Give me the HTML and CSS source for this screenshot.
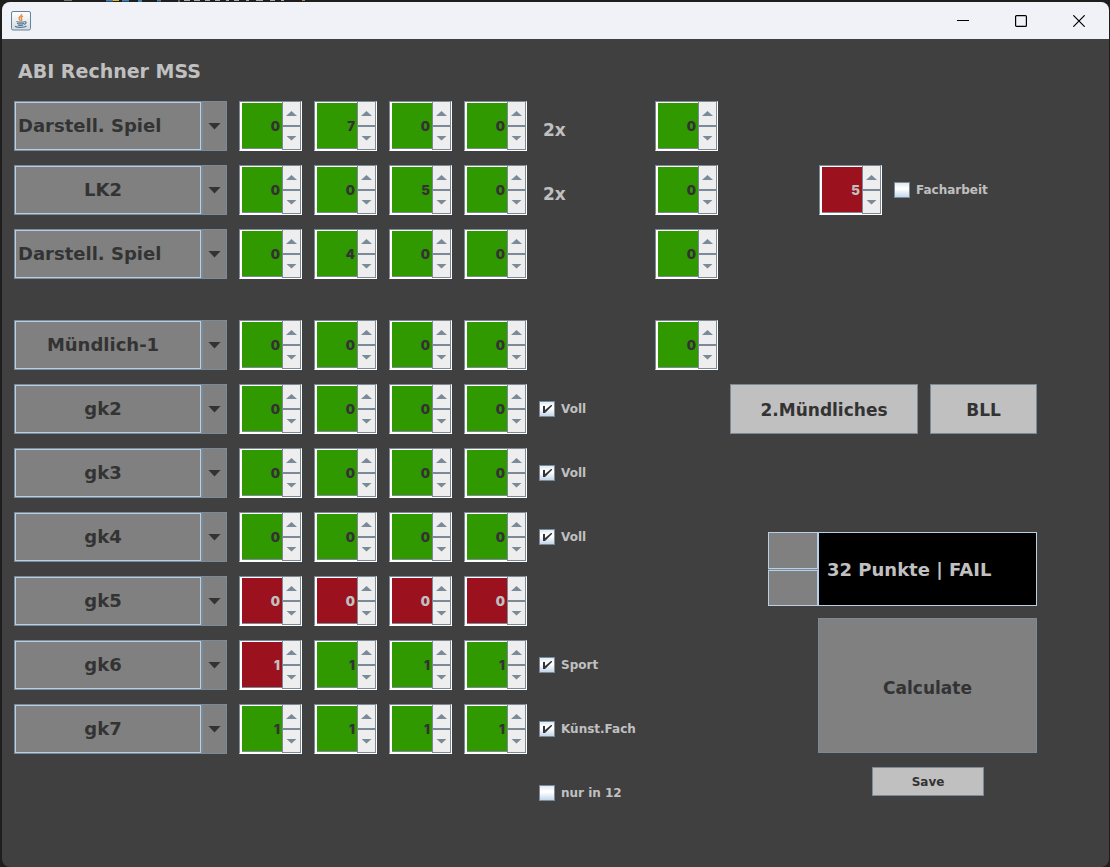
FILE: index.html
```html
<!DOCTYPE html>
<html lang="de">
<head>
<meta charset="utf-8">
<meta name="viewport" content="width=device-width, initial-scale=1">
<title>ABI Rechner</title>
<link rel="stylesheet" href="styles.css">
</head>
<body>
<svg class="backdrop-marks" width="320" height="2" aria-hidden="true">
  <path d="M64 .5h8" stroke="#77736a"/><path d="M106 .5h7M122 .5h7M138 1h4M157 .5h4" stroke="#3f7fae" stroke-width="2"/>
  <path d="M113 .5h6" stroke="#e8b417"/><path d="M178 1h2M184 .5h6M194 .5h6M205 .5h5M215 .5h5M226 .5h3M234 .5h5M246 .5h3M256 .5h7M270 .5h5M281 .5h3" stroke="#aaa"/><path d="M302 .5h3" stroke="#b87d4b"/>
</svg>
<div class="window">
  <header class="titlebar">
    <svg class="java-icon" width="20" height="20" viewBox="0 0 20 20" aria-hidden="true">
      <defs><linearGradient id="tile" x1="0" y1="0" x2="0" y2="1"><stop offset="0" stop-color="#fff"/><stop offset="1" stop-color="#d6dade"/></linearGradient></defs>
      <rect x=".5" y=".5" width="19" height="18.5" rx="1.5" fill="url(#tile)" stroke="#64849c"/>
      <path d="M10.7 3c.4 2-3.200 2.600-2.600 4.500.2.900 1 1.500 1.400 2.300M12 5.200c-2 .8-2.200 1.700-1.400 2.700.5.700.2 1.300-.3 1.900" fill="none" stroke="#ec8332" stroke-width="1.300"/>
      <path d="M5.500 10.500c1.800.8 6.500.8 8.300 0M6 12.300c1.800.7 5 .7 7 0M6.800 14c1.600.6 3.800.6 5.400 0M13.600 10.700c2.300-.5 2 2.300-.8 2.800M4 15.300c2 1.600 9.500 1.400 11.500-.3" fill="none" stroke="#557a98" stroke-width="1.200"/>
    </svg>
    <div class="window-controls">
      <button class="window-button" aria-label="Minimieren"><svg width="12" height="12" viewBox="0 0 12 12"><path d="M0 5.500h12" stroke="#000"/></svg></button>
      <button class="window-button" aria-label="Maximieren"><svg width="12" height="12" viewBox="0 0 12 12"><rect x=".6" y=".6" width="10.800" height="10.800" rx="1" fill="none" stroke="#000" stroke-width="1.200"/></svg></button>
      <button class="window-button" aria-label="Schließen"><svg width="12" height="12" viewBox="0 0 12 12"><path d="M.3.300l11.400 11.400M11.700.300L.3 11.700" stroke="#000" stroke-width="1.200"/></svg></button>
    </div>
  </header>

  <main class="content">
    <h1 class="heading">ABI Rechner MSS</h1>

    <section class="courses" id="advanced" aria-label="Leistungskurse"></section>

    <div class="lower">
      <section class="courses" id="basic" aria-label="Grundkurse"></section>

      <section class="side" aria-label="Ergebnis">
        <div id="oral-exam"></div>
        <div class="exam-buttons">
          <button class="button button-wide">2.Mündliches</button>
          <button class="button button-narrow">BLL</button>
        </div>
        <div class="result">
          <div class="result-steps">
            <button class="result-step" aria-label="Vorheriges"></button>
            <button class="result-step" aria-label="Nächstes"></button>
          </div>
          <output class="result-text">32 Punkte | FAIL</output>
        </div>
        <button class="button button-calculate">Calculate</button>
        <button class="button button-save">Save</button>
      </section>
    </div>
  </main>
</div>

<template id="spinner-template">
  <div class="spinner">
    <input class="spinner-value" type="number" min="0" max="15">
    <button class="spinner-button spinner-up" aria-label="Erhöhen"></button>
    <button class="spinner-button spinner-down" aria-label="Verringern"></button>
  </div>
</template>

<template id="combo-template">
  <div class="combo">
    <select class="combo-select"></select>
    <span class="combo-frame"></span>
    <span class="combo-arrow"></span>
  </div>
</template>

<script src="app.js"></script>
</body>
</html>
```

FILE: styles.css
```css
:root {
  --steel: #7a8a99;
  --sky: #b8cfe5;
  --gray: #808080;
  --silver: #c0c0c0;
  --ink: #333;
}

* {
  box-sizing: border-box;
}

body {
  margin: 0;
  min-height: 100vh;
  display: flex;
  flex-direction: column;
  background: #1e1e1e;
  color: var(--silver);
  font: bold 12px/16px "DejaVu Sans", sans-serif;
}

button, input, select {
  margin: 0;
  padding: 0;
  border: 0;
  border-radius: 0;
  font: inherit;
  color: inherit;
}

.backdrop-marks {
  display: block;
}

.window {
  flex: 1;
  display: flex;
  flex-direction: column;
  margin: 0 1px 0 2px;
  border-radius: 8px;
  overflow: hidden;
  background: #404040;
}

.titlebar {
  height: 37px;
  display: flex;
  justify-content: space-between;
  align-items: center;
  padding: 0 1px 0 9px;
  background: #f1f2f8;
}

.window-controls {
  display: flex;
  height: 100%;
}

.window-button {
  width: 58px;
  display: flex;
  justify-content: center;
  align-items: center;
  background: none;
}

.content {
  padding: 20px 72px 20px 12px;
}

.heading {
  margin: 0 0 18px;
  padding-left: 4px;
  font-size: 19px;
  line-height: 24px;
}

.courses {
  display: flex;
  flex-direction: column;
  gap: 14px;
}

.row {
  min-height: 50px;
  display: grid;
  grid-template-columns: 213px repeat(4, 63px) 104px 63px 1fr;
  column-gap: 12px;
  align-items: center;
}

#basic .row {
  grid-template-columns: 213px repeat(4, 63px) 104px;
}

.row-note {
  grid-column: 6;
}

.factor {
  padding: 8px 0 0 4px;
  font-size: 17px;
}

.paper {
  display: flex;
  align-items: center;
  gap: 12px;
  padding-left: 89px;
}

.lower {
  display: flex;
  gap: 12px;
  margin-top: 41px;
}

/* Combo boxes */
.combo {
  display: grid;
  grid-template-columns: 1fr 25px;
  height: 50px;
}

.combo-select {
  grid-area: 1 / 1 / 2 / 3;
  appearance: none;
  width: 100%;
  padding-right: 35px;
  border: 1px solid var(--steel);
  background: var(--gray);
  color: var(--ink);
  font-size: 18px;
  line-height: 24px;
  text-align-last: center;
}

.combo-left .combo-select {
  padding-left: 3px;
  text-align-last: left;
}

.combo-frame {
  grid-area: 1 / 1;
  margin: 1px;
  border: 1px solid var(--sky);
  box-shadow: 0 1px var(--steel), 1px 0 var(--steel);
  pointer-events: none;
}

.combo-arrow {
  grid-area: 1 / 2;
  display: flex;
  justify-content: center;
  align-items: center;
  border: 1px solid var(--steel);
  pointer-events: none;
}

.combo-arrow::before {
  content: "";
  width: 13px;
  height: 7px;
  background: var(--ink);
  clip-path: polygon(0 0, 100% 0, 50% 100%);
}

/* Spinners */
.spinner {
  width: 63px;
  height: 50px;
  display: grid;
  grid-template: 1fr 1fr / 1fr 19px;
  border: 1px solid;
  border-color: var(--steel) #fff #fff var(--steel);
  background: #fff;
}

.spinner-value {
  grid-area: 1 / 1 / 3 / 2;
  appearance: textfield;
  min-width: 0;
  margin: 1px 0 1px 2px;
  padding-right: 2px;
  border-bottom: 1px solid var(--steel);
  background: #309900;
  color: var(--ink);
  font: 900 13px "Inter", sans-serif;
  text-align: right;
}

.spinner-value::-webkit-inner-spin-button {
  display: none;
}

.spinner-low .spinner-value {
  background: #9b111e;
  color: var(--silver);
}

.spinner-button {
  grid-column: 2;
  display: flex;
  justify-content: center;
  align-items: center;
  border: solid var(--steel);
  border-width: 0 1px 1px;
  background: #eee;
}

.spinner-down {
  border-top-width: 1px;
}

.spinner-button::before {
  content: "";
  width: 11px;
  height: 5px;
  background: var(--steel);
}

.spinner-up::before {
  clip-path: polygon(50% 0, 100% 100%, 0 100%);
}

.spinner-down::before {
  clip-path: polygon(0 0, 100% 0, 50% 100%);
}

/* Tick boxes */
.check {
  display: flex;
  align-items: center;
  gap: 6px;
  line-height: 18px;
  white-space: nowrap;
}

.check-box {
  appearance: none;
  width: 16px;
  height: 16px;
  border: 1px solid var(--steel);
  background: linear-gradient(#dfe9f3, #fff 35%, #fff 45%, #c3d6e9);
}

.check-box:checked::before {
  content: "";
  display: block;
  width: 14px;
  height: 14px;
  background: var(--ink);
  clip-path: polygon(3px 4px, 5px 4px, 5px 8px, 11px 3px, 12px 3px, 12px 4px, 5px 11px, 3px 11px);
}

/* Right-hand side */
.side {
  flex: 1;
  display: flex;
  flex-direction: column;
}

.exam-buttons {
  display: flex;
  gap: 12px;
  margin: 14px 0 98px 75px;
}

.button {
  border: 1px solid var(--steel);
  background: var(--silver);
  color: var(--ink);
  font-size: 17px;
}

.button-wide,
.button-narrow {
  height: 50px;
  padding-top: 2px;
  box-shadow: inset -1px -1px var(--silver);
}

.button-wide {
  flex: 1;
}

.button-narrow {
  width: 107px;
}

.result {
  display: flex;
  height: 74px;
  margin-left: 113px;
}

.result-steps {
  width: 50px;
  display: grid;
  grid-template-rows: 1fr 1fr;
  gap: 1px;
  background: var(--steel);
}

.result-step {
  border: 1px solid var(--sky);
  background: var(--gray);
}

.result-text {
  flex: 1;
  display: flex;
  align-items: center;
  padding: 2px 0 0 8px;
  border: 1px solid var(--sky);
  background: #000;
  font-size: 18px;
  white-space: nowrap;
}

.button-calculate {
  height: 135px;
  margin: 12px 0 14px 163px;
  padding-top: 4px;
  background: var(--gray);
}

.button-save {
  width: 112px;
  height: 29px;
  margin: 0 53px 0 auto;
  font-size: 12px;
}
```

FILE: app.js
```js
const advanced = [
  { name: "Darstell. Spiel", left: true, points: [0, 7, 0, 0], factor: "2x", exam: 0 },
  { name: "LK2", points: [0, 0, 5, 0], factor: "2x", exam: 0, paper: 5 },
  { name: "Darstell. Spiel", left: true, points: [0, 4, 0, 0], exam: 0 }
];

const basic = [
  { name: "Mündlich-1", points: [0, 0, 0, 0] },
  { name: "gk2", points: [0, 0, 0, 0], check: "Voll", checked: true },
  { name: "gk3", points: [0, 0, 0, 0], check: "Voll", checked: true },
  { name: "gk4", points: [0, 0, 0, 0], check: "Voll", checked: true },
  { name: "gk5", points: [0, 0, 0, 0], low: [0, 1, 2, 3] },
  { name: "gk6", points: [1, 1, 1, 1], low: [0], check: "Sport", checked: true },
  { name: "gk7", points: [1, 1, 1, 1], check: "Künst.Fach", checked: true },
  { check: "nur in 12", checked: false }
];

function copy(id) {
  return document.getElementById(id).content.firstElementChild.cloneNode(true);
}

function spinner(value, label, low) {
  const box = copy("spinner-template");
  const input = box.querySelector("input");
  input.defaultValue = value;
  input.setAttribute("aria-label", label);
  box.classList.toggle("spinner-low", Boolean(low));
  box.querySelector(".spinner-up").addEventListener("click", () => input.stepUp());
  box.querySelector(".spinner-down").addEventListener("click", () => input.stepDown());
  return box;
}

function combo(name, left) {
  const box = copy("combo-template");
  const select = box.querySelector("select");
  select.setAttribute("aria-label", "Fach");
  select.add(new Option(name));
  box.classList.toggle("combo-left", Boolean(left));
  return box;
}

function check(text, checked) {
  const label = document.createElement("label");
  const box = document.createElement("input");
  label.className = "check";
  box.className = "check-box";
  box.type = "checkbox";
  box.defaultChecked = checked;
  label.append(box, text);
  return label;
}

function row(course) {
  const line = document.createElement("div");
  line.className = "row";
  if (course.name) {
    line.append(combo(course.name, course.left));
    course.points.forEach((value, i) => {
      const low = course.low && course.low.includes(i);
      line.append(spinner(value, `${course.name} Halbjahr ${i + 1}`, low));
    });
  }
  const note = document.createElement("div");
  note.className = "row-note";
  if (course.factor) {
    note.classList.add("factor");
    note.textContent = course.factor;
  }
  if (course.check) {
    note.append(check(course.check, course.checked));
  }
  line.append(note);
  if (course.exam !== undefined) {
    line.append(spinner(course.exam, `${course.name} Prüfung`));
  }
  if (course.paper !== undefined) {
    const paper = document.createElement("div");
    paper.className = "paper";
    paper.append(spinner(course.paper, "Facharbeit Punkte", true), check("Facharbeit", false));
    line.append(paper);
  }
  return line;
}

document.getElementById("advanced").append(...advanced.map(row));
document.getElementById("basic").append(...basic.map(row));
document.getElementById("oral-exam").append(spinner(0, "Mündliche Prüfung"));
```
